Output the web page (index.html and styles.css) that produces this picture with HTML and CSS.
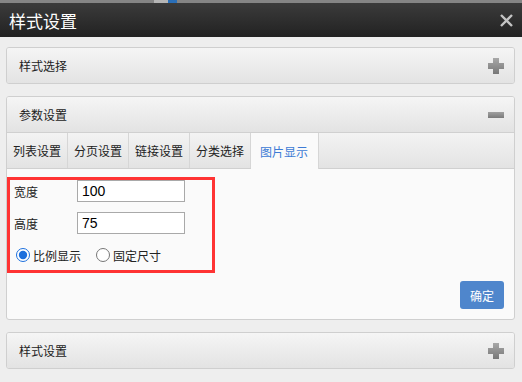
FILE: index.html
```html
<!DOCTYPE html>
<html lang="zh-CN">
<head>
    <meta charset="UTF-8">
    <title>样式设置</title>
    <link rel="stylesheet" href="styles.css">
</head>
<body>
    <div class="backdrop-strip">
        <span class="strip-gray"></span>
        <span class="strip-light"></span>
        <span class="strip-blue"></span>
    </div>
    <div class="titlebar">
        <span class="title">样式设置</span>
        <svg class="close" width="13" height="13" viewBox="0 0 13 13">
            <path d="M1 1 L12 12 M12 1 L1 12" stroke="#c4c4c4" stroke-width="2.4" fill="none"/>
        </svg>
    </div>

    <div class="dialog-body">
        <div class="panel">
            <div class="panel-head">
                <span>样式选择</span>
                <svg class="icon" width="16" height="16" viewBox="0 0 16 16">
                    <defs>
                        <linearGradient id="g1" x1="0" y1="0" x2="0" y2="1">
                            <stop offset="0" stop-color="#a8a8a8"/>
                            <stop offset="1" stop-color="#777"/>
                        </linearGradient>
                    </defs>
                    <path d="M5 0 H11 V5 H16 V11 H11 V16 H5 V11 H0 V5 H5 Z" fill="url(#g1)"/>
                </svg>
            </div>
        </div>

        <div class="panel">
            <div class="panel-head">
                <span>参数设置</span>
                <svg class="icon" width="16" height="6" viewBox="0 0 16 6">
                    <defs>
                        <linearGradient id="g2" x1="0" y1="0" x2="0" y2="1">
                            <stop offset="0" stop-color="#a0a0a0"/>
                            <stop offset="1" stop-color="#7a7a7a"/>
                        </linearGradient>
                    </defs>
                    <rect width="16" height="6" fill="url(#g2)"/>
                </svg>
            </div>
            <div class="tabs">
                <span class="tab">列表设置</span>
                <span class="tab">分页设置</span>
                <span class="tab">链接设置</span>
                <span class="tab">分类选择</span>
                <span class="tab active">图片显示</span>
            </div>
            <div class="tab-content">
                <div class="mark-box">
                    <div class="field">
                        <label class="field-label">宽度</label>
                        <input class="field-input" type="text" value="100">
                    </div>
                    <div class="field">
                        <label class="field-label">高度</label>
                        <input class="field-input" type="text" value="75">
                    </div>
                    <div class="radios">
                        <label class="radio"><input type="radio" name="mode" checked>比例显示</label>
                        <label class="radio"><input type="radio" name="mode">固定尺寸</label>
                    </div>
                </div>
                <div class="actions">
                    <button class="btn-ok">确定</button>
                </div>
            </div>
        </div>

        <div class="panel">
            <div class="panel-head">
                <span>样式设置</span>
                <svg class="icon" width="16" height="16" viewBox="0 0 16 16">
                    <path d="M5 0 H11 V5 H16 V11 H11 V16 H5 V11 H0 V5 H5 Z" fill="url(#g1)"/>
                </svg>
            </div>
        </div>
    </div>
</body>
</html>
```

FILE: styles.css
```css
body {
    margin: 0;
    background-color: #eee;
    font-family: 'Liberation Sans', 'Noto Sans CJK SC', sans-serif;
    font-size: 12px;
    color: #222;
}
.backdrop-strip {
    display: flex;
    height: 3px;
    background-color: #858585;
}
.strip-gray {
    width: 154px;
}
.strip-light {
    width: 14px;
    background-color: #b5b5b5;
}
.strip-blue {
    width: 9px;
    background-color: #2a6fb8;
}
.titlebar {
    height: 34px;
    display: flex;
    align-items: center;
    justify-content: space-between;
    padding: 0 9px 0 9px;
    background: linear-gradient(#3b3b3b, #222);
}
.title {
    color: #fff;
    font-size: 17px;
}
.close {
    display: block;
}
.dialog-body {
    padding: 10px 7px 0 6px;
}
.panel {
    border: 1px solid #cfcfcf;
    border-radius: 3px;
    margin-bottom: 12px;
    background-color: #fafafa;
    overflow: hidden;
}
.panel-head {
    height: 35px;
    display: flex;
    align-items: center;
    justify-content: space-between;
    padding: 0 10px 0 12px;
    background: linear-gradient(#f5f5f5, #e3e3e3);
    color: #222;
}
.icon {
    display: block;
}
.tabs {
    display: flex;
    height: 35px;
    border-top: 1px solid #d0d0d0;
    border-bottom: 1px solid #d0d0d0;
    background: linear-gradient(#f3f3f3, #e3e3e3);
}
.tab {
    display: flex;
    align-items: center;
    padding: 0 6px;
    border-right: 1px solid #d6d6d6;
    color: #222;
}
.tab.active {
    padding: 0 10px 0 9px;
    background: #fafafa;
    color: #3d7bd5;
    margin-bottom: -1px;
}
.tab-content {
    height: 150px;
    padding-top: 8px;
    box-sizing: border-box;
}
.mark-box {
    width: 198px;
    border: 3px solid #f33;
    padding: 0 0 4px 4px;
}
.field {
    display: flex;
    align-items: center;
    height: 22px;
    margin-bottom: 10px;
}
.field-label {
    width: 63px;
}
.field-input {
    width: 108px;
    height: 22px;
    box-sizing: border-box;
    border: 1px solid #a9a9a9;
    padding: 0 4px;
    font-family: 'Liberation Sans', sans-serif;
    font-size: 14px;
    color: #000;
    background: #fff;
}
.radios {
    display: flex;
    align-items: center;
    height: 22px;
    gap: 13px;
}
.radio {
    display: flex;
    align-items: center;
}
.radio input {
    margin: 0 3px 0 2px;
    width: 14px;
    height: 14px;
    accent-color: #1c6fdc;
}
.actions {
    display: flex;
    justify-content: flex-end;
    padding: 8px 10px 0 0;
}
.btn-ok {
    width: 44px;
    height: 28px;
    border: none;
    border-radius: 3px;
    background-color: #4f86cc;
    color: #fff;
    font-family: 'Liberation Sans', 'Noto Sans CJK SC', sans-serif;
    font-size: 12px;
    padding: 0;
}
```
